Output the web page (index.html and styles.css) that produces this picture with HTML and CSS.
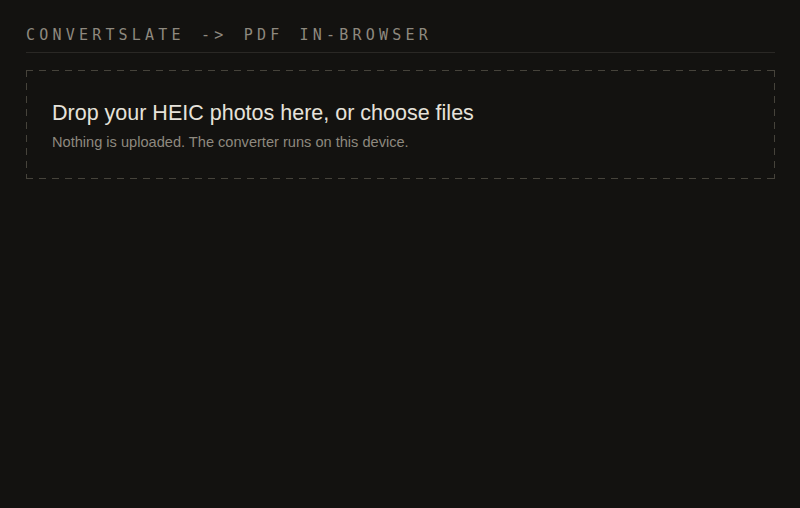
FILE: index.html
```
<!DOCTYPE html>
<html>
<head>
<meta charset="utf-8">
<link rel="stylesheet" href="styles.css">
</head>
<body>
<div class="page">
  <header class="top">CONVERTSLATE -&gt; PDF IN-BROWSER</header>
  <section class="drop">
    <h1 class="drop-title">Drop your HEIC photos here, or choose files</h1>
    <p class="drop-note">Nothing is uploaded. The converter runs on this device.</p>
  </section>
</div>
</body>
</html>
```
FILE: styles.css
```
html, body {
  margin: 0;
  padding: 0;
  background: #131210;
}
.page {
  padding: 25px 25px 0 26px;
}
.top {
  font-family: "DejaVu Sans Mono", monospace;
  font-size: 15px;
  line-height: 20px;
  letter-spacing: 4.2px;
  word-spacing: 3px;
  color: #8e897f;
  padding-bottom: 7px;
  border-bottom: 1px solid #2a2825;
  white-space: nowrap;
}
.drop {
  margin-top: 17px;
  border: 1px solid transparent;
  background-origin: border-box;
  background-image:
    repeating-linear-gradient(90deg, #46433b 0 7px, transparent 7px 13px),
    repeating-linear-gradient(90deg, #46433b 0 7px, transparent 7px 13px),
    repeating-linear-gradient(180deg, #46433b 0 7px, transparent 7px 13px),
    repeating-linear-gradient(180deg, #46433b 0 7px, transparent 7px 13px);
  background-size: 100% 1px, 100% 1px, 1px 100%, 1px 100%;
  background-position: left top, left bottom, left top, right top;
  background-repeat: no-repeat;
  padding: 30px 25px 26px;
}
.drop-title {
  margin: 0;
  font-family: "Liberation Sans", Arial, sans-serif;
  font-weight: normal;
  font-size: 21.5px;
  line-height: 24px;
  color: #e6e2da;
}
.drop-note {
  margin: 7px 0 0;
  font-family: "Liberation Sans", Arial, sans-serif;
  font-size: 14.6px;
  line-height: 20px;
  color: #8e897f;
}
```
